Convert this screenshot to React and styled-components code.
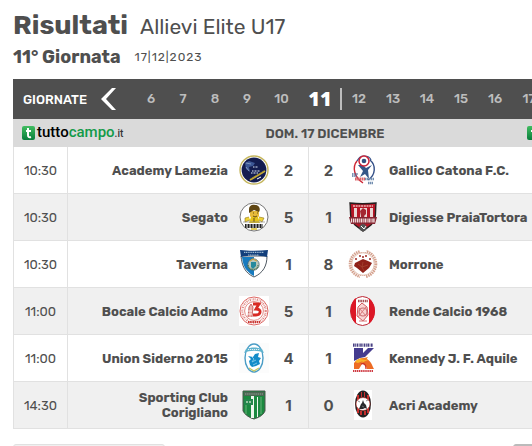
import React from 'react';
import styled, { createGlobalStyle, css } from 'styled-components';

const GlobalStyle = createGlobalStyle`
  * { box-sizing: border-box; }
  body {
    margin: 0;
    background: #fff;
    color: #4f4f4f;
    font-family: Rubik, Roboto, "Liberation Sans", sans-serif;
    overflow-x: hidden;
  }
  button { font: inherit; color: inherit; background: none; border: 0; padding: 0; cursor: pointer; }
`;

const Page = styled.main`
  padding: 8px 0 0 13px;
`;

const TitleRow = styled.header`
  display: flex;
  align-items: baseline;
  gap: 12px;
  height: 36px;
`;

const Title = styled.h1`
  margin: 0;
  font-size: 27px;
  line-height: 34px;
  font-weight: 700;
`;

const League = styled.span`
  font-size: 21px;
  line-height: 34px;
`;

const RoundRow = styled.div`
  display: flex;
  align-items: center;
  gap: 14px;
  height: 26px;
  margin-bottom: 9px;
`;

const RoundTitle = styled.h2`
  margin: 0;
  font-size: 18px;
  line-height: 26px;
  font-weight: 700;
`;

const DateText = styled.time`
  font-size: 12px;
  letter-spacing: 1px;
`;

const Panel = styled.section`
  min-width: 624px;
`;

const RoundNav = styled.nav`
  display: flex;
  align-items: center;
  height: 40px;
  background: #4f4f4f;
  color: #bdbdbd;
  overflow: hidden;
`;

const NavLabel = styled.span`
  width: 87px;
  flex: none;
  padding-left: 10px;
  color: #fff;
  font-size: 13px;
  font-weight: 500;
`;

const Arrow = styled.button`
  display: flex;
  flex: none;
  width: 35px;
  height: 24px;
`;

const RoundButton = styled.button`
  && {
    flex: none;
    width: ${(p) => (p.$wide ? '34px' : '32px')};
    height: 22px;
    font-size: 13px;
    line-height: 22px;
    font-weight: 500;
    ${(p) => p.$before && css`width: 37px;`}
    ${(p) => p.$current && css`
      width: 42px;
      border-right: 2px solid #bdbdbd;
      color: #fff;
      font-family: "Open Sans", sans-serif;
      font-size: 20px;
      font-weight: 800;
    `}
  }
`;

const DayBar = styled.div`
  display: grid;
  grid-template-columns: 1fr auto 1fr;
  align-items: center;
  height: 28px;
  padding: 0 9px;
  background: #dadada;
`;

const DayLabel = styled.h3`
  margin: 0;
  font-size: 13px;
  font-weight: 600;
`;

const Brand = styled.a`
  display: flex;
  align-items: center;
  gap: 2px;
  justify-self: ${(p) => (p.$end ? 'end' : 'start')};
  color: #000;
  font-family: Roboto, sans-serif;
  font-size: 15px;
  line-height: 20px;
  font-weight: 500;
  text-decoration: none;
`;

const Green = styled.span`
  color: #129a48;
`;

const Suffix = styled.small`
  color: #333;
  font-size: 10px;
`;

const Table = styled.table`
  width: 100%;
  table-layout: fixed;
  border-collapse: separate;
  border-spacing: 0;
`;

const Col = styled.col`
  width: ${(p) => p.$w}px;
`;

const Row = styled.tr`
  height: 47px;
  &:nth-child(even) { background: #f0f0f0; }
`;

const Cell = styled.td`
  padding: 0;
  border-bottom: 1px solid #e1e1e1;
`;

const TimeCell = styled(Cell)`
  border-left: 1px solid #e1e1e1;
  border-right: 1px solid #e1e1e1;
  font-size: 13px;
  text-align: center;
`;

const TeamCell = styled(Cell)`
  padding-left: ${(p) => (p.$home ? '20px' : '11px')};
  text-align: ${(p) => (p.$home ? 'right' : 'left')};
  font-size: 13px;
  line-height: 15px;
  font-weight: 700;
`;

const CrestCell = styled(Cell)`
  text-align: right;
  svg { display: block; margin-left: auto; }
`;

const ScoreCell = styled(Cell)`
  border-right: ${(p) => (p.$home ? '1px solid #e1e1e1' : '0')};
  text-align: center;
  font-family: Inter, sans-serif;
  font-size: 15px;
  font-weight: 700;
`;

const Footer = styled.footer`
  display: flex;
  justify-content: space-between;
  min-width: 624px;
  padding-top: 15px;
`;

const FooterBox = styled.div`
  width: ${(p) => (p.$dark ? '124px' : '152px')};
  height: 32px;
  border: 1px solid ${(p) => (p.$dark ? '#bbb' : '#e1e1e1')};
  border-radius: 3px;
  background: ${(p) => (p.$dark ? '#bbb' : '#f0f0f0')};
`;

const Svg = ({ children, size = 30, box = '0 0 30 30' }) => (
  <svg width={size} height={size} viewBox={box} aria-hidden="true">{children}</svg>
);

const Academy = () => (
  <Svg>
    <circle cx="15" cy="15" r="14" fill="#fff" stroke="#c5b65d" strokeWidth="1.4" />
    <circle cx="15" cy="15" r="12.4" fill="#141d50" />
    <path d="M6 8l4-2 6 2-2 3-4 1 1 5-4-3z" fill="#3c5794" />
    <path d="M7 8l5 1M7 12l3 4" stroke="#91a4c6" strokeWidth=".8" />
    <path d="M14 12h5M13 16h8M12 18h7" stroke="#9ca7c2" strokeWidth="1.3" strokeDasharray="1 .5" />
    <path d="M11 25L26 16" stroke="#c9ad35" strokeWidth="2" />
    <path d="M12 24L25 16" stroke="#7e712e" strokeWidth=".7" strokeDasharray="1 1" />
    <path d="M18 24l4-2" stroke="#fff" strokeWidth="1" />
  </Svg>
);

const Gallico = () => (
  <Svg>
    <path d="M9 6C4 12 6 22 15 28" fill="none" stroke="#cd2735" strokeWidth="1.4" />
    <path d="M22 5c6 5 6 15-2 20" fill="none" stroke="#334f87" strokeWidth="1.4" />
    <path d="M9 6c2-3 3-5 7-5s6 1 7 4" fill="none" stroke="#35538a" strokeWidth="1.2" />
    <path d="M10 10l5 6-3 6 5-3 4 5-1-9 4-5-6 3-3-3z" fill="#345788" />
    <circle cx="16" cy="6" r="5" fill="#fff" stroke="#cb2337" strokeWidth="1.5" />
    <circle cx="16" cy="6" r="2.3" fill="#315080" />
    <path d="M4 19h6M4 21h5" stroke="#52709c" strokeWidth="1.4" strokeDasharray="1.5 .6" />
    <path d="M7 24h10" stroke="#d76368" strokeWidth="3" strokeDasharray="1.7 .5" />
    <path d="M17 24h9M20 28h5" stroke="#738eb0" strokeWidth="2.4" strokeDasharray="1.5 .5" />
  </Svg>
);

const Segato = () => (
  <Svg>
    <circle cx="15" cy="15" r="14" fill="#fff" stroke="#777" strokeWidth="1" />
    <path d="M11 9v5c1 3 8 3 9 0V9" fill="#e6ba3b" />
    <path d="M10 11V7c0-3 3-5 6-4 4 0 6 4 4 7l-5-2z" fill="#604713" />
    <path d="M12 15h7l2 6H10z" fill="#e5c31c" />
    <path d="M10 15l-4 1v4l5-2M20 15l5 1-2 4-3-2" fill="#efd336" stroke="#8e7417" strokeWidth=".6" />
    <path d="M14 11h1m3 0h1M14 14l2 1 2-1M15 16v4" fill="none" stroke="#57410e" strokeWidth=".9" />
    <path d="M4 20h22" stroke="#888" strokeWidth=".7" />
    <path d="M6 24h18" stroke="#222" strokeWidth="4" strokeDasharray="1.3 .4 .8 .5" />
    <path d="M12 27h6" stroke="#d8bd26" strokeWidth="1.5" />
  </Svg>
);

const Digiesse = () => (
  <Svg>
    <path d="M2 1c8 1 17 1 26 0-1 9 1 17-5 22l-8 6-8-6C1 18 3 9 2 1z" fill="#b71626" stroke="#252020" strokeWidth="1.4" />
    <path d="M6 6h3v13H6zM12 6h7v13h-7zM22 6h3v13h-3z" fill="#e9d7d5" />
    <path d="M5 4h20" stroke="#efb6b6" strokeWidth="1.6" strokeDasharray="2 .7" />
    <path d="M12 9l3-3 3 2v4l-2 2 2 4h-5v-4z" fill="#a32731" />
    <path d="M1 15h28l-2 7H3z" fill="#862531" />
    <path d="M3 18.5h24" stroke="#f4dfdf" strokeWidth="4" strokeDasharray="1 .8 1.5 .6" />
    <circle cx="15" cy="25.5" r="3.6" fill="#555" />
    <path d="M13 24l3 3 2-3" stroke="#fff" fill="none" />
  </Svg>
);

const Taverna = () => (
  <Svg>
    <path d="M2 7h26c0 10-4 17-13 21C6 24 3 17 2 7z" fill="#fff" stroke="#3b4650" strokeWidth=".9" />
    <path d="M3 8h12v19C7 23 4 17 3 8z" fill="#177abe" />
    <path d="M1 1c8 1 19 1 28 0l-1 7c-8-2-18-2-26 0z" fill="#123e7b" />
    <path d="M5 3.4h20M9 6h11" stroke="#a1bdd3" strokeWidth="1.2" strokeDasharray="1.2 .6" />
    <circle cx="14.5" cy="15.5" r="5.7" fill="#bac7bc" stroke="#426273" strokeWidth=".7" />
    <path d="M12 13h5v4l-3 3-2-2z" fill="#268a9d" />
    <path d="M11 12l3-2 4 2" fill="none" stroke="#c3a14e" strokeWidth="1.2" />
    <path d="M9 16c0 6 10 6 10 0" fill="none" stroke="#4d7850" strokeWidth="1.5" strokeDasharray="1 .7" />
  </Svg>
);

const Morrone = () => (
  <Svg>
    <circle cx="15" cy="15" r="12.8" fill="none" stroke="#d5a28f" strokeWidth="3" strokeDasharray="1.5 .7" />
    <circle cx="15" cy="15" r="11.2" fill="#fff" stroke="#dbb3a1" strokeWidth=".7" />
    <path d="M12 0h6v3h-6zM12 27h6v3h-6z" fill="#fff" />
    <path d="M7 14l4-2 4-2 5 2 4 2-3 5-6 5-6-5-3-2z" fill="#8f2119" />
    <path d="M10 15l4 3 6-2M15 13l-1 5 2 4" stroke="#a84734" fill="none" strokeWidth=".7" />
    <path d="M7 10h2M11 7h2M17 7h2M21 10h2M14 8h2" stroke="#9e2a22" strokeWidth="1.7" />
  </Svg>
);

const Bocale = () => (
  <Svg>
    <path fill="#fff" d="M0 0h30v30H0z" />
    <circle cx="15" cy="15" r="14" fill="none" stroke="#dd6965" strokeWidth="1" />
    <circle cx="15" cy="15" r="11.7" fill="none" stroke="#e08a86" strokeWidth="2.2" strokeDasharray="1.2 .9 .6 .9" />
    <circle cx="15" cy="15" r="9.4" fill="#fff" stroke="#d96b65" strokeWidth=".8" />
    <path d="M9 21l1-10 2-3 2 3-1 10" fill="#edada8" stroke="#bd4d4b" strokeWidth=".8" />
    <path d="M14 8h6l-3 5c6 0 5 6 0 6h-3" fill="none" stroke="#d82a23" strokeWidth="2.8" />
    <path d="M8 18h5M9 15h4" stroke="#fff" strokeWidth=".8" />
    <path d="M9 26h12" stroke="#c93430" strokeWidth="2.2" strokeDasharray="1.5 .7" />
  </Svg>
);

const Rende = () => (
  <Svg>
    <ellipse cx="14.5" cy="15" rx="12" ry="14.5" fill="#fff" stroke="#bd2633" />
    <path d="M3 10c1-4 3-7 5-8v26c-5-5-6-12-5-18zM21 2c8 7 8 19 0 26z" fill="#dc1726" />
    <path d="M10 5h10" stroke="#a75155" strokeWidth="2.3" strokeDasharray="1.6 .7" />
    <path d="M10 11l4-4 5 4 1 8-5 6-6-5z" fill="#f8d4d3" stroke="#d15c61" strokeWidth="1" />
    <circle cx="15" cy="16" r="4" fill="none" stroke="#c96c70" strokeWidth="1.2" />
    <path d="M11 12l8 9M18 11l-8 10M11 25h8" stroke="#d9797b" strokeWidth="1" />
  </Svg>
);

const Siderno = () => (
  <Svg>
    <path fill="#fcfcfc" d="M0 0h30v30H0z" />
    <ellipse cx="15" cy="15" rx="9" ry="14" fill="#fff" stroke="#4b9dc6" strokeWidth="1.4" />
    <path d="M7 6c5-2 11-2 16 0l2 4c-6-3-14-3-20 0z" fill="#5fb3cf" />
    <path d="M11 22l-1-4 2-2-3-3 5 1 2-3 4-1-1 4 3 1-2 3 1 3-4 2-4 1z" fill="#148cc9" />
    <path d="M13 14l2 2-2 3 4-2M14 22l4-2" fill="none" stroke="#83c9e8" strokeWidth=".9" />
    <path d="M9 6.5h12" stroke="#e0f1f3" strokeWidth="1" strokeDasharray="1.2 .8" />
    <path d="M10 25l5 3 5-3" fill="none" stroke="#c6c861" strokeWidth="1.2" />
  </Svg>
);

const Kennedy = () => (
  <Svg>
    <path d="M5 2.2h20" stroke="#484083" strokeWidth="3.2" strokeDasharray="1.6 .6 .8 .6" />
    <path d="M6 5h9v5l5-5h6l-9 9-5 1-6 3z" fill="#443b8e" />
    <path d="M6 26v-6c3-4 8-6 13-4 5 3 5 7 7 10h-7c-1-4-3-5-5-5l-3 5z" fill="#ed6c25" />
    <path d="M7 19c4-5 9-4 13-2l-7 3 2-2-5 2z" fill="#f8b52a" />
    <path d="M12 16l8-2-2 3" fill="#ef7a22" />
    <path d="M18 26c0-5-2-6-5-5" fill="none" stroke="#c92e28" strokeWidth="1.2" />
    <path d="M5 28h20" stroke="#cf3941" strokeWidth="2" strokeDasharray="1.3 .6" />
  </Svg>
);

const Sporting = () => (
  <Svg>
    <path d="M4 1h22v20c-2 5-8 7-11 8-4-1-9-4-11-8z" fill="#1b8940" stroke="#4c564d" strokeWidth="1" />
    <path d="M12 5h3v23h-3zM18 7h1v20h-1z" fill="#edf6ee" />
    <path d="M7 15v9M22 7v17" stroke="#5cad71" strokeWidth="1.2" />
    <path d="M5 2h20v4H5z" fill="#4c6653" />
    <path d="M6 4h18" stroke="#94a396" strokeWidth="1.2" strokeDasharray="1.4 .7" />
    <path d="M5 9h9v6H5z" fill="#23864b" />
    <path d="M7 12h6" stroke="#94c29f" strokeWidth="2" strokeDasharray="2 1" />
  </Svg>
);

const Acri = () => (
  <Svg>
    <path fill="#fff" d="M6 0h18v30H6z" />
    <ellipse cx="15" cy="14" rx="8" ry="13.5" fill="#242122" />
    <path d="M9 5h2v18H9zM19 5h2v18h-2zM13 2h1v5h-1zM16 2h1v5h-1zM12 21h2v4h-2zM16 21h2v4h-2z" fill="#c52e2c" />
    <ellipse cx="15" cy="14" rx="7" ry="6.5" fill="#fff" stroke="#ba3831" strokeWidth=".7" />
    <path d="M11 19l2-5 1-1 1-3 1 3 2 2 1 4-2-1-2 1z" fill="#28292c" />
    <path d="M12 12l-2-1M18 11l2-1M14 16l2 1" stroke="#777" strokeWidth=".8" />
  </Svg>
);

const matches = [
  { time: '10:30', home: 'Academy Lamezia', HomeCrest: Academy, hs: 2, as: 2, AwayCrest: Gallico, away: 'Gallico Catona F.C.' },
  { time: '10:30', home: 'Segato', HomeCrest: Segato, hs: 5, as: 1, AwayCrest: Digiesse, away: 'Digiesse PraiaTortora' },
  { time: '10:30', home: 'Taverna', HomeCrest: Taverna, hs: 1, as: 8, AwayCrest: Morrone, away: 'Morrone' },
  { time: '11:00', home: 'Bocale Calcio Admo', HomeCrest: Bocale, hs: 5, as: 1, AwayCrest: Rende, away: 'Rende Calcio 1968' },
  { time: '11:00', home: 'Union Siderno 2015', HomeCrest: Siderno, hs: 4, as: 1, AwayCrest: Kennedy, away: 'Kennedy J. F. Aquile' },
  { time: '14:30', home: 'Sporting Club Corigliano', HomeCrest: Sporting, hs: 1, as: 0, AwayCrest: Acri, away: 'Acri Academy' },
];

const rounds = [6, 7, 8, 9, 10, 11, 12, 13, 14, 15, 16, 17];
const columns = [55, 160, 41, 40, 39, 30];

const BrandLink = ({ end }) => (
  <Brand href="#tuttocampo" $end={end}>
    <svg width="13" height="14" viewBox="0 0 13 14" aria-hidden="true">
      <defs>
        <linearGradient id={end ? 'leafEnd' : 'leafStart'} x2="0" y2="1">
          <stop stopColor="#42bd61" /><stop offset="1" stopColor="#087e3c" />
        </linearGradient>
      </defs>
      <rect width="13" height="14" rx="2" fill={`url(#${end ? 'leafEnd' : 'leafStart'})`} />
      <path d="M6 2v7q0 3 3 2M4 5h5" fill="none" stroke="#fff" strokeWidth="2" />
    </svg>
    <span>tutto<Green>campo</Green><Suffix>.it</Suffix></span>
  </Brand>
);

export default function App() {
  return (
    <>
      <GlobalStyle />
      <Page>
        <TitleRow>
          <Title>Risultati</Title>
          <League>Allievi Elite U17</League>
        </TitleRow>
        <RoundRow>
          <RoundTitle>11° Giornata</RoundTitle>
          <DateText dateTime="2023-12-17">17|12|2023</DateText>
        </RoundRow>
        <Panel>
          <RoundNav aria-label="Giornate">
            <NavLabel>GIORNATE</NavLabel>
            <Arrow aria-label="Giornata precedente">
              <svg width="18" height="24" viewBox="0 0 18 24" aria-hidden="true">
                <path d="M12 1h4L6 12l10 11h-4L1 12z" fill="#fff" />
              </svg>
            </Arrow>
            {rounds.map((n) => (
              <RoundButton key={n} $wide={n > 9} $before={n === 10} $current={n === 11}>{n}</RoundButton>
            ))}
          </RoundNav>
          <DayBar>
            <BrandLink />
            <DayLabel>DOM. 17 DICEMBRE</DayLabel>
            <BrandLink end />
          </DayBar>
          <Table>
            <colgroup>
              {columns.map((w, i) => <Col key={i} $w={w} />)}
              <col />
            </colgroup>
            <tbody>
              {matches.map(({ HomeCrest, AwayCrest, ...m }) => (
                <Row key={m.home}>
                  <TimeCell>{m.time}</TimeCell>
                  <TeamCell $home>{m.home}</TeamCell>
                  <CrestCell><HomeCrest /></CrestCell>
                  <ScoreCell $home>{m.hs}</ScoreCell>
                  <ScoreCell>{m.as}</ScoreCell>
                  <CrestCell><AwayCrest /></CrestCell>
                  <TeamCell>{m.away}</TeamCell>
                </Row>
              ))}
            </tbody>
          </Table>
        </Panel>
        <Footer>
          <FooterBox />
          <FooterBox $dark />
        </Footer>
      </Page>
    </>
  );
}
